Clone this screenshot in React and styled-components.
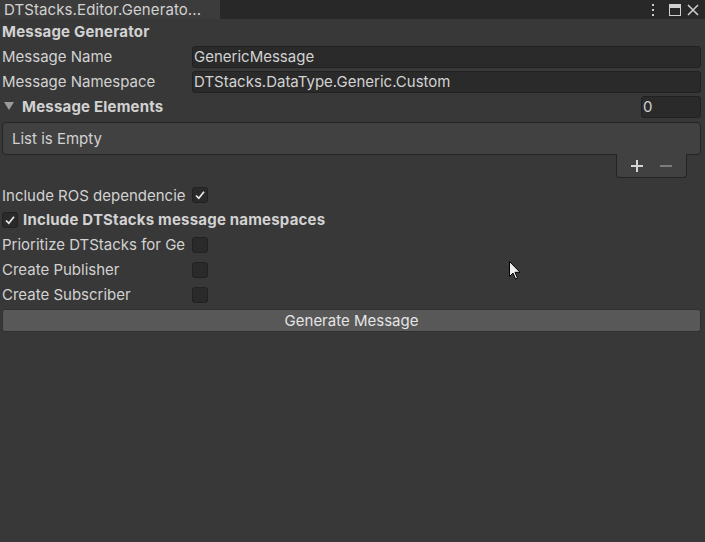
import React from "react";
import styled, { createGlobalStyle } from "styled-components";

const Global = createGlobalStyle`
  html, body { margin: 0; padding: 0; background: #383838; }
  body { font-family: Inter, "Noto Sans", sans-serif; font-size: 15px; color: #d2d2d2; }
  #root { width: 705px; height: 542px; overflow: hidden; }
`;

const Window = styled.div`
  position: relative;
  width: 705px;
  height: 542px;
  background: #383838;
  display: flex;
  flex-direction: column;
`;

const TabBar = styled.div`
  height: 19px;
  flex: none;
  background: #282828;
  display: flex;
  align-items: stretch;
`;

const Tab = styled.div`
  width: 220px;
  background: #3c3c3c;
  padding-left: 4px;
  box-sizing: border-box;
  display: flex;
  align-items: center;
  font-size: 15px;
  letter-spacing: 0.1px;
  color: #d2d2d2;
  white-space: nowrap;
  overflow: hidden;
`;

const TabIcons = styled.div`
  margin-left: auto;
  display: flex;
  align-items: center;
  gap: 6px;
  padding-right: 6px;
`;

const Content = styled.div`
  display: flex;
  flex-direction: column;
  padding: 0 4px 0 2px;
`;

const Row = styled.div`
  height: ${(p) => p.$h || 25}px;
  margin-top: ${(p) => p.$mt || 0}px;
  flex: none;
  display: flex;
  align-items: center;
`;

const Title = styled.div`
  font-weight: 700;
  letter-spacing: 0.2px;
  white-space: nowrap;
`;

const Label = styled.div`
  width: 190px;
  flex: none;
  white-space: nowrap;
  overflow: hidden;
`;

const Field = styled.div`
  flex: ${(p) => (p.$w ? "none" : "1")};
  width: ${(p) => (p.$w ? `${p.$w}px` : "auto")};
  margin-left: ${(p) => (p.$push ? "auto" : "0")};
  height: 22px;
  box-sizing: border-box;
  background: #2a2a2a;
  border: 1px solid #212121;
  border-radius: 3px;
  display: flex;
  align-items: center;
  padding-left: 1px;
  color: #d2d2d2;
  white-space: nowrap;
`;

const Foldout = styled.div`
  display: flex;
  align-items: center;
  gap: 8px;
  padding-left: 2px;
  font-weight: 700;
  letter-spacing: 0.2px;
`;

const ListBox = styled.div`
  margin-top: 3px;
  height: 33px;
  flex: none;
  box-sizing: border-box;
  background: #414141;
  border: 1px solid #242424;
  border-radius: 4px;
  display: flex;
  align-items: center;
  padding-left: 9px;
`;

const ListFooter = styled.div`
  align-self: flex-end;
  margin-right: 14px;
  margin-top: -1px;
  width: 71px;
  height: 24px;
  flex: none;
  box-sizing: border-box;
  background: #414141;
  border: 1px solid #242424;
  border-top: none;
  border-radius: 0 0 4px 4px;
  display: flex;
  align-items: center;
  justify-content: space-around;
  padding: 0 6px;
`;

const Check = styled.div`
  width: 16px;
  height: 16px;
  flex: none;
  box-sizing: border-box;
  background: #2a2a2a;
  border: 1px solid #212121;
  border-radius: 3px;
  display: flex;
  align-items: center;
  justify-content: center;
`;

const BoldToggle = styled.div`
  display: flex;
  align-items: center;
  gap: 5px;
  font-weight: 700;
  letter-spacing: 0.2px;
  white-space: nowrap;
`;

const Button = styled.div`
  margin-top: 2px;
  height: 23px;
  flex: none;
  box-sizing: border-box;
  background: #585858;
  border: 1px solid #303030;
  border-radius: 3px;
  display: flex;
  align-items: center;
  justify-content: center;
  color: #e4e4e4;
`;

const Cursor = styled.svg`
  position: absolute;
  left: 509px;
  top: 261px;
`;

const Tick = () => (
  <svg width="12" height="12" viewBox="0 0 12 12">
    <path d="M2 6.5 L4.8 9.2 L10 2.8" fill="none" stroke="#e8e8e8" strokeWidth="1.7" />
  </svg>
);

const Toggle = ({ on }) => <Check>{on && <Tick />}</Check>;

export default function App() {
  return (
    <Window>
      <Global />
      <TabBar>
        <Tab>DTStacks.Editor.Generato...</Tab>
        <TabIcons>
          <svg width="4" height="12" viewBox="0 0 4 12">
            <rect x="1" y="0" width="2" height="2" fill="#c8c8c8" />
            <rect x="1" y="5" width="2" height="2" fill="#c8c8c8" />
            <rect x="1" y="10" width="2" height="2" fill="#c8c8c8" />
          </svg>
          <svg width="12" height="12" viewBox="0 0 12 12" style={{ marginLeft: 8 }}>
            <rect x="0.5" y="0.5" width="11" height="11" fill="none" stroke="#d0d0d0" />
            <rect x="0" y="0" width="12" height="4" fill="#d0d0d0" />
          </svg>
          <svg width="12" height="12" viewBox="0 0 12 12">
            <path d="M1 1 L11 11 M11 1 L1 11" stroke="#d0d0d0" strokeWidth="1.5" />
          </svg>
        </TabIcons>
      </TabBar>
      <Content>
        <Row>
          <Title>Message Generator</Title>
        </Row>
        <Row>
          <Label>Message Name</Label>
          <Field>GenericMessage</Field>
        </Row>
        <Row>
          <Label>Message Namespace</Label>
          <Field>DTStacks.DataType.Generic.Custom</Field>
        </Row>
        <Row>
          <Foldout>
            <svg width="10" height="9" viewBox="0 0 10 9">
              <path d="M0 0 L10 0 L5 8 Z" fill="#9a9a9a" />
            </svg>
            Message Elements
          </Foldout>
          <Field $w={60} $push>0</Field>
        </Row>
        <ListBox>List is Empty</ListBox>
        <ListFooter>
          <svg width="12" height="12" viewBox="0 0 12 12">
            <path d="M6 0 V12 M0 6 H12" stroke="#d4d4d4" strokeWidth="2" />
          </svg>
          <svg width="12" height="12" viewBox="0 0 12 12">
            <path d="M0 6 H12" stroke="#7c7c7c" strokeWidth="2" />
          </svg>
        </ListFooter>
        <Row $mt={5} $h={24}>
          <Label>Include ROS dependencie</Label>
          <Toggle on />
        </Row>
        <Row>
          <BoldToggle>
            <Toggle on />
            Include DTStacks message namespaces
          </BoldToggle>
        </Row>
        <Row>
          <Label>Prioritize DTStacks for Ge</Label>
          <Toggle />
        </Row>
        <Row>
          <Label>Create Publisher</Label>
          <Toggle />
        </Row>
        <Row>
          <Label>Create Subscriber</Label>
          <Toggle />
        </Row>
        <Button>Generate Message</Button>
      </Content>
      <Cursor width="12" height="19" viewBox="0 0 12 19">
        <path d="M0.5 0.5 L0.5 15.5 L4 12 L6.5 18 L8.5 17 L6 11.3 L11 11.3 Z" fill="#eeeeee" stroke="#000" strokeWidth="1" />
      </Cursor>
    </Window>
  );
}
